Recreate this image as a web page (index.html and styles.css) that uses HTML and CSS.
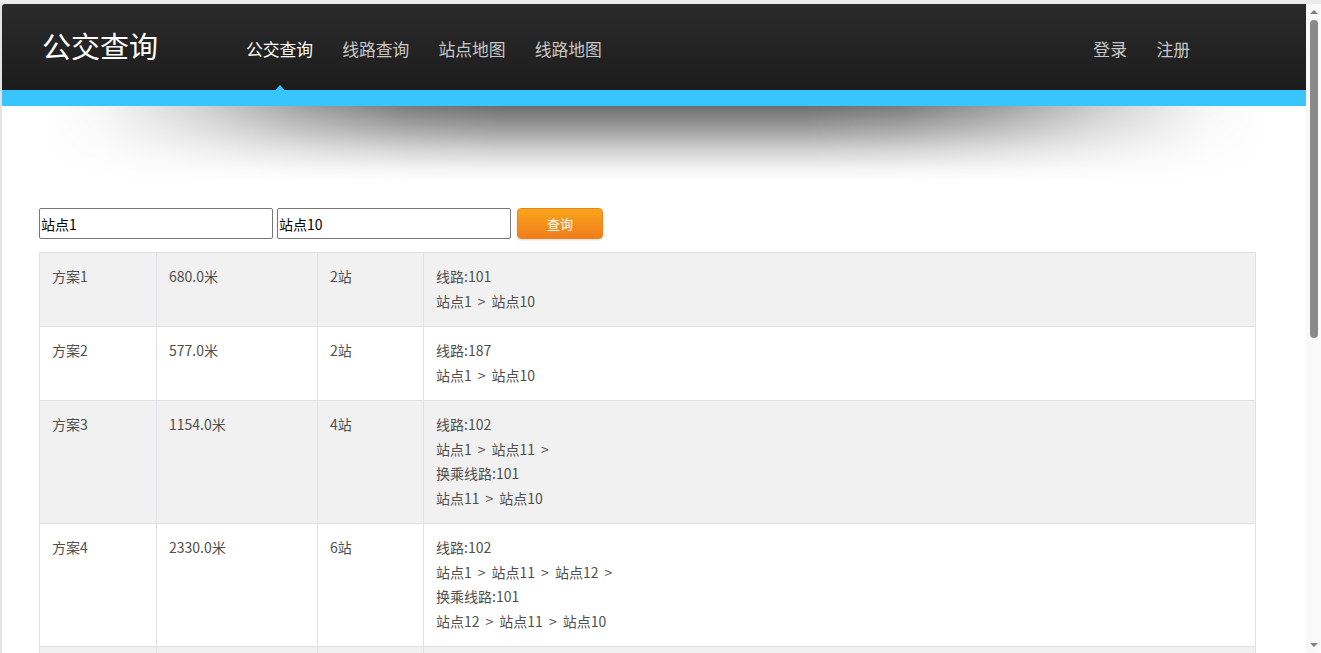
FILE: index.html
```html
<!DOCTYPE html>
<html lang="zh-CN">
<head>
<meta charset="utf-8">
<title>公交查询</title>
<link rel="stylesheet" href="styles.css">
</head>
<body>
<div class="window">
<div class="page">
<header class="header">
  <div class="header-main">
    <div class="logo">公交查询</div>
    <nav class="nav">
      <a class="nav-item active" href="#">公交查询</a>
      <a class="nav-item" href="#">线路查询</a>
      <a class="nav-item" href="#">站点地图</a>
      <a class="nav-item" href="#">线路地图</a>
    </nav>
    <div class="user">
      <a class="user-item" href="#">登录</a>
      <a class="user-item" href="#">注册</a>
    </div>
  </div>
  <div class="header-bar"></div>
</header>
<div class="shadow"></div>
<main class="content">
  <form class="search">
    <input class="search-input" type="text" value="站点1">
    <input class="search-input" type="text" value="站点10">
    <button class="search-btn" type="button">查询</button>
  </form>
  <table class="plans">
    <colgroup>
      <col class="c1"><col class="c2"><col class="c3"><col class="c4">
    </colgroup>
    <tbody>
      <tr>
        <td>方案1</td><td>680.0米</td><td>2站</td>
        <td><div class="ln">线路:101</div><div class="ln">站点1<span class="sep">&gt;</span>站点10</div></td>
      </tr>
      <tr>
        <td>方案2</td><td>577.0米</td><td>2站</td>
        <td><div class="ln">线路:187</div><div class="ln">站点1<span class="sep">&gt;</span>站点10</div></td>
      </tr>
      <tr>
        <td>方案3</td><td>1154.0米</td><td>4站</td>
        <td><div class="ln">线路:102</div><div class="ln">站点1<span class="sep">&gt;</span>站点11<span class="sep">&gt;</span></div><div class="ln">换乘线路:101</div><div class="ln">站点11<span class="sep">&gt;</span>站点10</div></td>
      </tr>
      <tr>
        <td>方案4</td><td>2330.0米</td><td>6站</td>
        <td><div class="ln">线路:102</div><div class="ln">站点1<span class="sep">&gt;</span>站点11<span class="sep">&gt;</span>站点12<span class="sep">&gt;</span></div><div class="ln">换乘线路:101</div><div class="ln">站点12<span class="sep">&gt;</span>站点11<span class="sep">&gt;</span>站点10</div></td>
      </tr>
      <tr>
        <td>方案5</td><td>2330.0米</td><td>6站</td>
        <td><div class="ln">线路:187</div><div class="ln">站点1<span class="sep">&gt;</span>站点11<span class="sep">&gt;</span>站点12<span class="sep">&gt;</span></div><div class="ln">换乘线路:101</div><div class="ln">站点12<span class="sep">&gt;</span>站点11<span class="sep">&gt;</span>站点10</div></td>
      </tr>
    </tbody>
  </table>
</main>
</div>
<div class="scrollbar" aria-hidden="true">
  <div class="sb-arrow sb-up"></div>
  <div class="sb-thumb"></div>
  <div class="sb-space"></div>
  <div class="sb-arrow sb-down"></div>
</div>
</div>
</body>
</html>
```

FILE: styles.css
```css
html, body {
  height: 100%;
  overflow: hidden;
}
html {
  background: #ffffff;
}
body {
  margin: 0;
  box-sizing: border-box;
  border-top: 4px solid #ececec;
  border-left: 2px solid #e4e4e4;
  font-family: "Noto Sans CJK SC", "Liberation Sans", sans-serif;
  color: #555;
}
.window {
  display: flex;
  height: 100%;
}
.page {
  flex: 1;
  min-width: 0;
  overflow: hidden;
  background: #fff;
}
.scrollbar {
  width: 15px;
  flex: none;
  background: #f9f9f9;
  display: flex;
  flex-direction: column;
  align-items: center;
  border-bottom-right-radius: 6px;
}
.sb-arrow {
  width: 15px;
  height: 16px;
  display: flex;
  align-items: center;
  justify-content: center;
}
.sb-up::before, .sb-down::before {
  content: "";
  border-left: 4px solid transparent;
  border-right: 4px solid transparent;
}
.sb-up::before {
  border-bottom: 4px solid #7f7f7f;
}
.sb-down::before {
  border-top: 4px solid #7f7f7f;
}
.sb-thumb {
  width: 8px;
  height: 318px;
  background: #8a8a8a;
  border-radius: 4px;
}
.sb-space {
  flex: 1;
}
.header-main {
  height: 86px;
  display: flex;
  align-items: center;
  background: linear-gradient(to bottom, #2b2b2b, #1c1c1c);
  border-top-left-radius: 3px;
}
.logo {
  margin-left: 40px;
  width: 204px;
  font-size: 29px;
  color: #fff;
  margin-top: -4px;
}
.nav {
  display: flex;
  flex: 1;
  gap: 29.1px;
  margin-top: 3px;
}
.nav-item, .user-item {
  position: relative;
  font-size: 16.8px;
  color: #c8c8c8;
  text-decoration: none;
  line-height: 24px;
}
.nav-item.active {
  color: #fff;
}
.nav-item.active::after {
  content: "";
  position: absolute;
  left: 50%;
  margin-left: -8px;
  top: 48px;
  border-left: 8px solid transparent;
  border-right: 8px solid transparent;
  border-bottom: 9px solid #38c4fd;
}
.user {
  display: flex;
  gap: 29.5px;
  margin-right: 116px;
  margin-top: 3px;
}
.header-bar {
  height: 16px;
  background: #38c4fd;
}
.shadow {
  height: 76px;
  background: linear-gradient(to bottom, rgba(0,0,0,0.57) 0, rgba(0,0,0,0.37) 24px, rgba(0,0,0,0.18) 44px, rgba(0,0,0,0.04) 64px, rgba(0,0,0,0) 76px);
  -webkit-mask-image: linear-gradient(to right, transparent 40px, rgba(0,0,0,0.06) 100px, rgba(0,0,0,0.33) 204px, rgba(0,0,0,0.65) 304px, rgba(0,0,0,0.9) 404px, #000 500px, #000 calc(100% - 500px), rgba(0,0,0,0.9) calc(100% - 404px), rgba(0,0,0,0.65) calc(100% - 304px), rgba(0,0,0,0.33) calc(100% - 204px), rgba(0,0,0,0.06) calc(100% - 100px), transparent calc(100% - 40px));
  mask-image: linear-gradient(to right, transparent 40px, rgba(0,0,0,0.06) 100px, rgba(0,0,0,0.33) 204px, rgba(0,0,0,0.65) 304px, rgba(0,0,0,0.9) 404px, #000 500px, #000 calc(100% - 500px), rgba(0,0,0,0.9) calc(100% - 404px), rgba(0,0,0,0.65) calc(100% - 304px), rgba(0,0,0,0.33) calc(100% - 204px), rgba(0,0,0,0.06) calc(100% - 100px), transparent calc(100% - 40px));
}
.content {
  padding: 26px 0 0 37px;
}
.search {
  display: flex;
  align-items: center;
  gap: 4px;
  margin: 0 0 13px 0;
}
.search-input {
  width: 234px;
  height: 31px;
  box-sizing: border-box;
  border: 1px solid #767676;
  border-radius: 2px;
  padding: 0 1px;
  font-family: "Noto Sans CJK SC", "Liberation Sans", sans-serif;
  font-size: 14px;
  color: #000;
  margin: 0;
}
.search-btn {
  margin-left: 2px;
  width: 86px;
  height: 31px;
  border: 1px solid #e9861b;
  border-radius: 4px;
  background: linear-gradient(to bottom, #f9a51b, #f07d1c);
  color: #fff;
  font-family: "Noto Sans CJK SC", "Liberation Sans", sans-serif;
  font-size: 13px;
  box-shadow: 0 1px 2px rgba(0,0,0,0.15);
}
.plans {
  border-collapse: collapse;
  width: 1217px;
  table-layout: fixed;
  font-size: 14px;
  color: #4f4f4f;
}
.plans col.c1 { width: 117px; }
.plans col.c2 { width: 161px; }
.plans col.c3 { width: 106px; }
.plans td {
  border: 1px solid #e2e2e6;
  padding: 11px 12px 13px 12px;
  vertical-align: top;
  line-height: 24.5px;
}
.plans tr:nth-child(odd) td {
  background: #f1f1f1;
}
.plans tr:nth-child(even) td {
  background: #fff;
}
.ln {
  line-height: 24.5px;
}
.sep {
  margin: 0 6px;
}
```
